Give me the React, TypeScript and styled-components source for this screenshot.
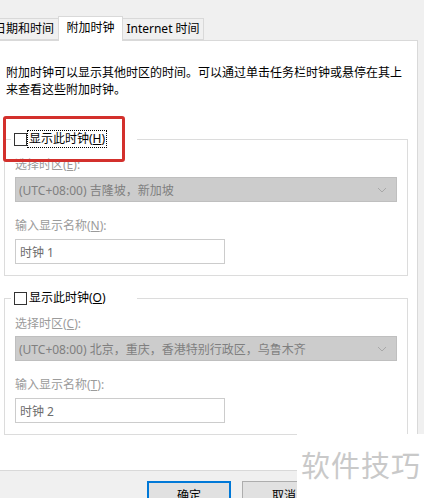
import React from 'react';
import styled, { createGlobalStyle } from 'styled-components';

const GlobalStyle = createGlobalStyle`
    html, body {
        margin: 0;
        padding: 0;
        background: #f0f0f0;
    }

    body {
        font-family: "Noto Sans", "Noto Sans CJK SC", sans-serif;
        font-size: 12px;
        color: #000;
    }
`;

const Window = styled.div`
    position: relative;
    width: 424px;
    height: 498px;
    overflow: hidden;
    background: #f0f0f0;
`;

const TabRow = styled.div`
    display: flex;
    align-items: flex-end;
    height: 40px;
    margin-left: -11px;
    position: relative;
    z-index: 2;
`;

const Tab = styled.div<{ $width: number; $active?: boolean }>`
    box-sizing: border-box;
    width: ${({ $width }) => $width}px;
    height: ${({ $active }) => ($active ? 25 : 22)}px;
    margin-bottom: ${({ $active }) => ($active ? -1 : 0)}px;
    margin-left: ${({ $active }) => ($active ? -1 : 0)}px;
    margin-right: ${({ $active }) => ($active ? -1 : 0)}px;
    display: flex;
    align-items: center;
    justify-content: center;
    padding-bottom: ${({ $active }) => ($active ? 2 : 0)}px;
    background: ${({ $active }) => ($active ? '#fff' : '#f0f0f0')};
    border: 1px solid #d9d9d9;
    border-bottom: ${({ $active }) => ($active ? 'none' : '1px solid #d9d9d9')};
    position: relative;
    z-index: ${({ $active }) => ($active ? 2 : 1)};
    white-space: nowrap;
    line-height: 16px;
`;

const Panel = styled.div`
    box-sizing: border-box;
    width: 419px;
    height: 431px;
    margin-left: -1px;
    padding-left: 1px;
    background: #fff;
    border: 1px solid #d9d9d9;
    position: relative;
    z-index: 1;
`;

const Description = styled.p`
    width: 400px;
    margin: 23px 0 0 5px;
    line-height: 17px;
`;

const GroupBox = styled.fieldset<{ $top: number }>`
    box-sizing: border-box;
    width: 404px;
    margin: ${({ $top }) => $top}px 0 0 3px;
    padding: 0 0 11px 10px;
    border: 1px solid #dcdcdc;
    min-inline-size: 0;
`;

const Legend = styled.legend`
    box-sizing: border-box;
    width: 126px;
    height: 18px;
    margin-left: -4px;
    padding: 0 0 0 3px;
    display: flex;
    align-items: center;
`;

const CheckBox = styled.span`
    box-sizing: border-box;
    width: 13px;
    height: 13px;
    border: 1px solid #333;
    background: #fff;
    flex: none;
`;

const CheckLabel = styled.span<{ $focused?: boolean }>`
    margin-left: 1px;
    padding: 0 1px;
    line-height: 16px;
    outline: ${({ $focused }) => ($focused ? '1px dotted #000' : 'none')};
    white-space: nowrap;
`;

const FieldLabel = styled.div<{ $top: number }>`
    margin-top: ${({ $top }) => $top}px;
    line-height: 17px;
    color: #9b9b9b;
`;

const Combo = styled.div`
    box-sizing: border-box;
    width: 382px;
    height: 25px;
    margin-top: 4px;
    padding: 0 9px 0 3px;
    display: flex;
    align-items: center;
    justify-content: space-between;
    background: #cccccc;
    border: 1px solid #bfbfbf;
    color: #7f7f7f;
    white-space: nowrap;
`;

const TextBox = styled.div`
    box-sizing: border-box;
    width: 210px;
    height: 25px;
    margin-top: 5px;
    padding-left: 4px;
    display: flex;
    align-items: center;
    background: #fff;
    border: 1px solid #cccccc;
    color: #6d6d6d;
`;

const ButtonRow = styled.div`
    display: flex;
    gap: 11px;
    padding: 10px 0 0 147px;
`;

const Button = styled.div<{ $primary?: boolean }>`
    box-sizing: border-box;
    width: 84px;
    height: 28px;
    flex: none;
    display: flex;
    align-items: center;
    justify-content: center;
    background: #e1e1e1;
    border: ${({ $primary }) => ($primary ? '2px solid #0078d7' : '1px solid #adadad')};
`;

const Highlight = styled.div`
    position: absolute;
    left: 3px;
    top: 116px;
    width: 122px;
    height: 46px;
    box-sizing: border-box;
    border: 3px solid #d3302c;
    border-radius: 3px;
    z-index: 5;
`;

const Watermark = styled.div`
    position: absolute;
    left: 297px;
    top: 434px;
    width: 127px;
    height: 64px;
    box-sizing: border-box;
    padding: 15px 0 0 4px;
    background: #fff;
    color: #c9c9c9;
    font-family: "Noto Sans CJK SC", sans-serif;
    font-size: 29px;
    line-height: 30px;
    letter-spacing: 1px;
    white-space: nowrap;
    z-index: 5;
`;

const Chevron = () => (
    <svg width="10" height="6" viewBox="0 0 10 6" fill="none">
        <polyline points="1,1 5,5 9,1" stroke="#a8a8a8" strokeWidth="1" />
    </svg>
);

interface ClockGroupProps {
    top: number;
    checkKey: string;
    zoneKey: string;
    nameKey: string;
    zone: string;
    name: string;
    focused?: boolean;
}

const ClockGroup = ({ top, checkKey, zoneKey, nameKey, zone, name, focused }: ClockGroupProps) => (
    <GroupBox $top={top}>
        <Legend>
            <CheckBox />
            <CheckLabel $focused={focused}>
                显示此时钟(<u>{checkKey}</u>)
            </CheckLabel>
        </Legend>
        <FieldLabel $top={8}>
            选择时区(<u>{zoneKey}</u>):
        </FieldLabel>
        <Combo>
            <span>{zone}</span>
            <Chevron />
        </Combo>
        <FieldLabel $top={15}>
            输入显示名称(<u>{nameKey}</u>):
        </FieldLabel>
        <TextBox>{name}</TextBox>
    </GroupBox>
);

export default function App() {
    return (
        <Window>
            <GlobalStyle />
            <TabRow>
                <Tab $width={70}>日期和时间</Tab>
                <Tab $width={65} $active>
                    附加时钟
                </Tab>
                <Tab $width={82}>Internet 时间</Tab>
            </TabRow>
            <Panel>
                <Description>
                    附加时钟可以显示其他时区的时间。可以通过单击任务栏时钟或悬停在其上来查看这些附加时钟。
                </Description>
                <ClockGroup
                    top={32}
                    checkKey="H"
                    zoneKey="E"
                    nameKey="N"
                    zone="(UTC+08:00) 吉隆坡，新加坡"
                    name="时钟 1"
                    focused
                />
                <ClockGroup
                    top={13}
                    checkKey="O"
                    zoneKey="C"
                    nameKey="T"
                    zone="(UTC+08:00) 北京，重庆，香港特别行政区，乌鲁木齐"
                    name="时钟 2"
                />
            </Panel>
            <ButtonRow>
                <Button $primary>确定</Button>
                <Button>取消</Button>
            </ButtonRow>
            <Highlight />
            <Watermark>软件技巧</Watermark>
        </Window>
    );
}
